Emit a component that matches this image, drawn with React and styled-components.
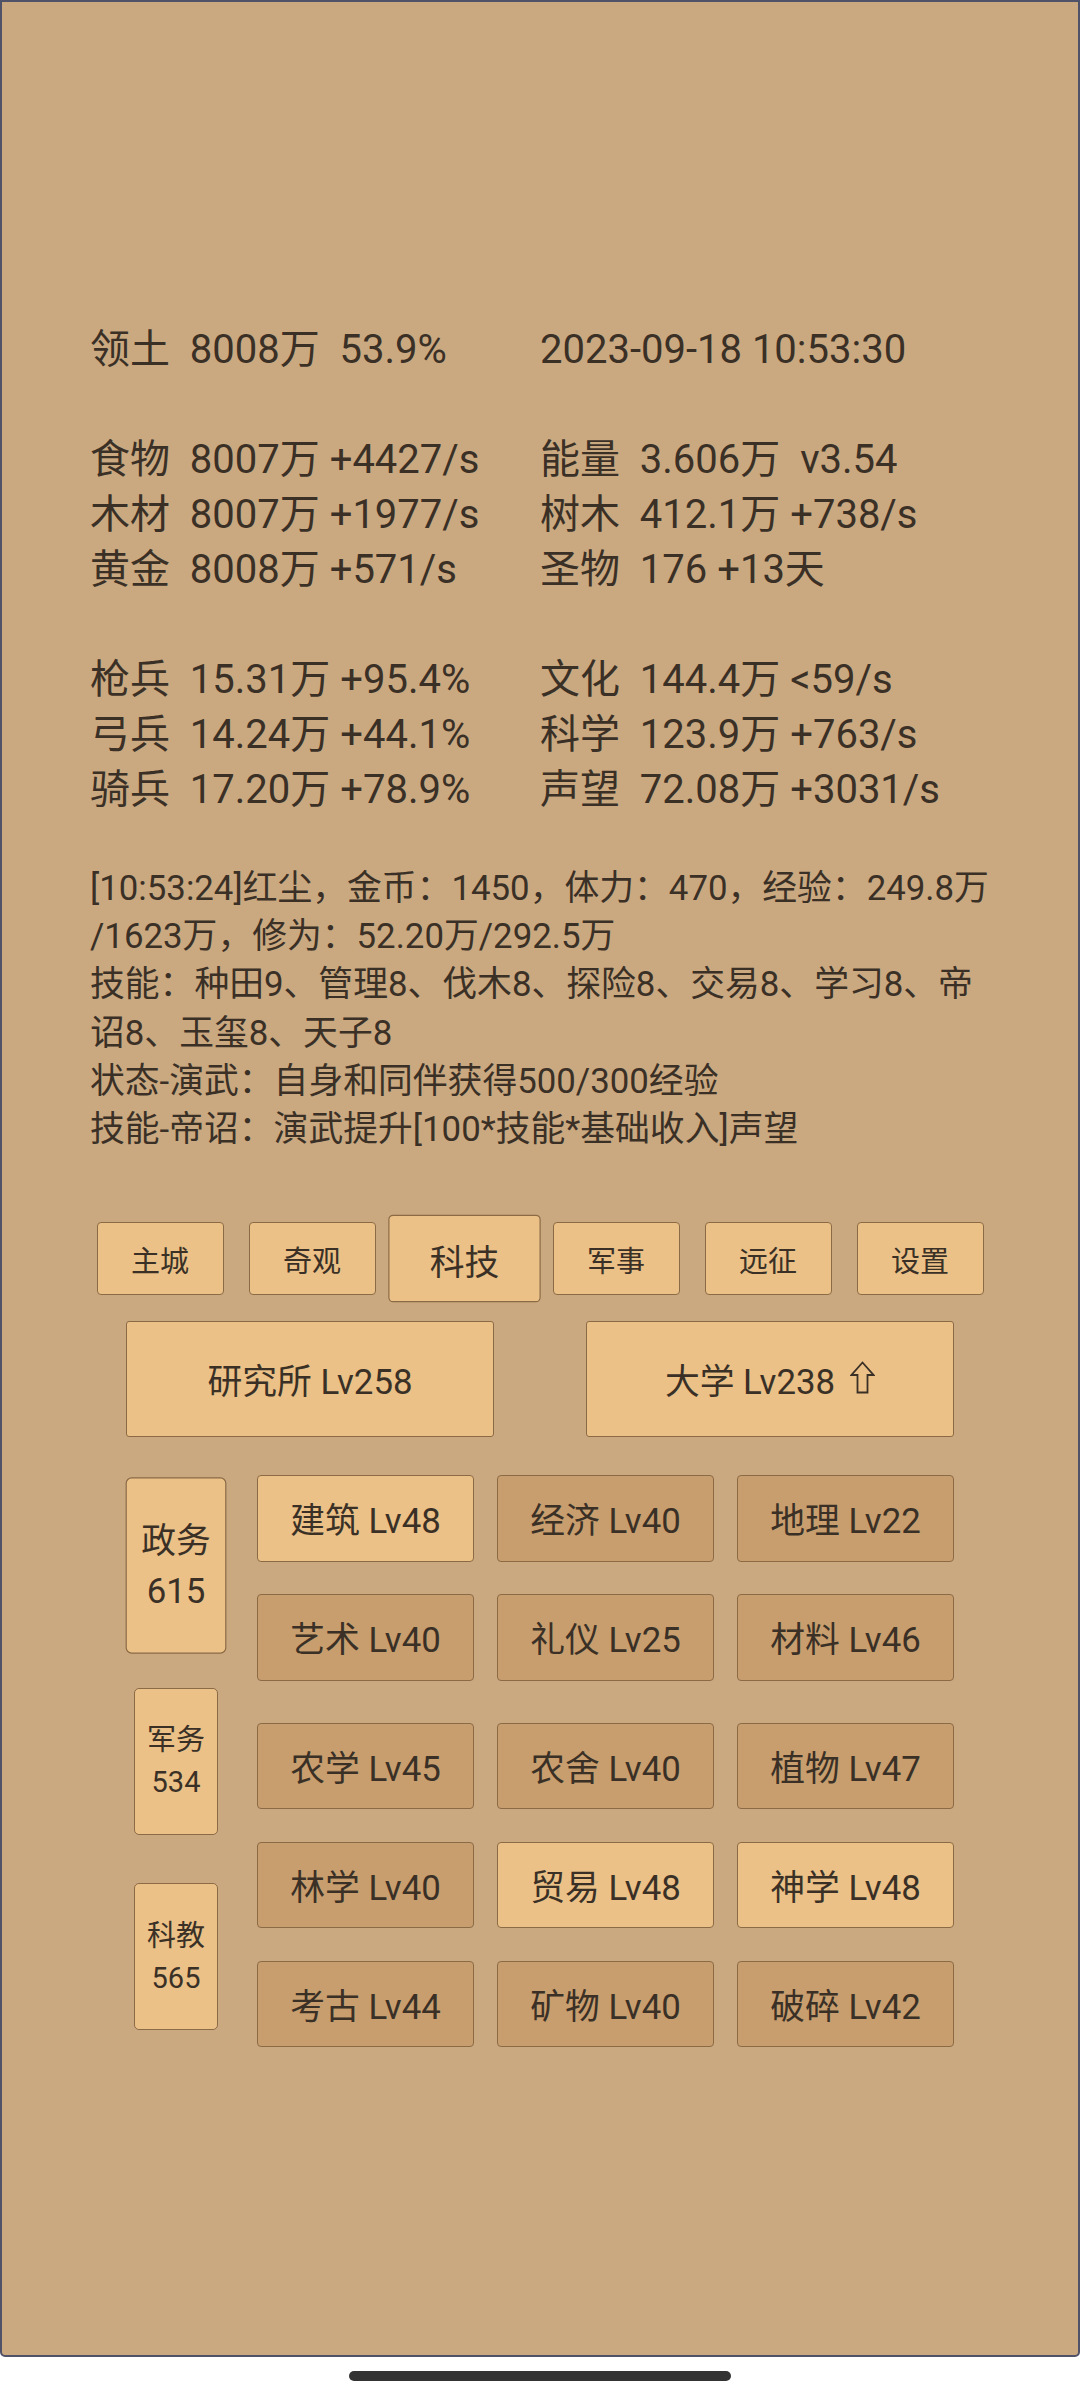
import React from "react";
import styled, { createGlobalStyle, css } from "styled-components";

const GlobalStyle = createGlobalStyle`
  html, body {
    margin: 0;
    padding: 0;
    background: #ffffff;
  }
  body {
    font-family: Roboto, "Noto Sans CJK SC", sans-serif;
    color: #3a3026;
  }
  * { box-sizing: border-box; }
`;

const Screen = styled.div`
  height: 2357px;
  border: 2px solid #505268;
  border-radius: 0 0 5px 5px;
  background: #caa981;
  padding-top: 320px;
  display: flex;
  flex-direction: column;
  align-items: center;
`;

const StatsGrid = styled.div`
  width: 900px;
  display: grid;
  grid-template-columns: 450px 450px;
  grid-auto-rows: 55px;
  font-size: 40px;
  line-height: 55px;
  white-space: pre;
`;

const StatCell = styled.div`
  align-self: center;
`;

const BlankRow = styled.div`
  grid-column: 1 / span 2;
`;

const Log = styled.div`
  width: 906px;
  padding-right: 6px;
  margin-top: 47px;
  margin-left: 6px;
  font-size: 34.8px;
  line-height: 48.2px;
  line-break: anywhere;
`;

const LogLine = styled.p`
  margin: 0;
`;

const baseButton = css`
  border: 1px solid #8b6b46;
  color: #3a3026;
  font-family: Roboto, "Noto Sans CJK SC", sans-serif;
  display: flex;
  align-items: center;
  justify-content: center;
  text-align: center;
  padding: 0;
`;

const NavRow = styled.div`
  margin-top: 69px;
  display: flex;
  gap: 25px;
  justify-content: center;
`;

const NavButton = styled.div`
  ${baseButton};
  width: 127px;
  height: 73px;
  border-radius: 4px;
  background: #ebc187;
  font-size: 29px;
  transform: ${(p) => (p.$active ? "scale(1.2)" : "none")};
`;

const BuildingRow = styled.div`
  margin-top: 26px;
  display: flex;
  gap: 92px;
  justify-content: center;
`;

const BuildingButton = styled.div`
  ${baseButton};
  width: 368px;
  height: 116px;
  border-radius: 3px;
  background: #ebc187;
  font-size: 34.8px;
  white-space: pre;
`;

const UpArrow = styled.svg`
  width: 25px;
  height: 33px;
  margin-left: 15px;
  margin-top: -3px;
  flex: none;
`;

const TechSection = styled.div`
  margin-top: 38px;
  width: 828px;
  display: flex;
  align-items: center;
  gap: 31px;
`;

const Sidebar = styled.div`
  width: 100px;
  display: flex;
  flex-direction: column;
  align-items: center;
  gap: 48.5px;
`;

const SideButton = styled.div`
  ${baseButton};
  width: 84px;
  height: 147px;
  border-radius: 5px;
  background: #ebc187;
  font-size: 29px;
  line-height: 42px;
  flex-direction: column;
  transform: ${(p) => (p.$active ? "scale(1.2)" : "none")};
`;

const TechGroups = styled.div`
  display: flex;
  flex-direction: column;
  gap: 42px;
`;

const TechGrid = styled.div`
  display: grid;
  grid-template-columns: repeat(3, 217px);
  grid-auto-rows: 86.5px;
  column-gap: 23px;
  row-gap: 32.5px;
`;

const TechCell = styled.div`
  ${baseButton};
  border-radius: 4px;
  font-size: 34.8px;
  white-space: pre;
  background: ${(p) => (p.$lit ? "#ebc187" : "#c89e6e")};
`;

const HomeArea = styled.div`
  height: 43px;
  display: flex;
  justify-content: center;
  padding-top: 14px;
`;

const HomeBar = styled.div`
  width: 382px;
  height: 10px;
  border-radius: 5px;
  background: #333333;
`;

const statGroups = [
  [["领土  8008万  53.9%", "2023-09-18 10:53:30"]],
  [
    ["食物  8007万 +4427/s", "能量  3.606万  v3.54"],
    ["木材  8007万 +1977/s", "树木  412.1万 +738/s"],
    ["黄金  8008万 +571/s", "圣物  176 +13天"],
  ],
  [
    ["枪兵  15.31万 +95.4%", "文化  144.4万 <59/s"],
    ["弓兵  14.24万 +44.1%", "科学  123.9万 +763/s"],
    ["骑兵  17.20万 +78.9%", "声望  72.08万 +3031/s"],
  ],
];

const logLines = [
  "[10:53:24]红尘，金币：1450，体力：470，经验：249.8万/1623万，修为：52.20万/292.5万",
  "技能：种田9、管理8、伐木8、探险8、交易8、学习8、帝诏8、玉玺8、天子8",
  "状态-演武：自身和同伴获得500/300经验",
  "技能-帝诏：演武提升[100*技能*基础收入]声望",
];

const tabs = [
  { name: "主城" },
  { name: "奇观" },
  { name: "科技", active: true },
  { name: "军事" },
  { name: "远征" },
  { name: "设置" },
];

const sides = [
  { name: "政务", count: 615, active: true },
  { name: "军务", count: 534 },
  { name: "科教", count: 565 },
];

const techA = [
  { name: "建筑", lv: 48, lit: true },
  { name: "经济", lv: 40 },
  { name: "地理", lv: 22 },
  { name: "艺术", lv: 40 },
  { name: "礼仪", lv: 25 },
  { name: "材料", lv: 46 },
];

const techB = [
  { name: "农学", lv: 45 },
  { name: "农舍", lv: 40 },
  { name: "植物", lv: 47 },
  { name: "林学", lv: 40 },
  { name: "贸易", lv: 48, lit: true },
  { name: "神学", lv: 48, lit: true },
  { name: "考古", lv: 44 },
  { name: "矿物", lv: 40 },
  { name: "破碎", lv: 42 },
];

export default function App() {
  return (
    <>
      <GlobalStyle />
      <Screen>
        <StatsGrid>
          {statGroups.map((group, gi) => (
            <React.Fragment key={gi}>
              {gi > 0 && <BlankRow />}
              {group.map(([l, r], ri) => (
                <React.Fragment key={ri}>
                  <StatCell>{l}</StatCell>
                  <StatCell>{r}</StatCell>
                </React.Fragment>
              ))}
            </React.Fragment>
          ))}
        </StatsGrid>

        <Log>
          {logLines.map((t, i) => (
            <LogLine key={i}>{t}</LogLine>
          ))}
        </Log>

        <NavRow>
          {tabs.map((t) => (
            <NavButton key={t.name} $active={t.active}>
              {t.name}
            </NavButton>
          ))}
        </NavRow>

        <BuildingRow>
          <BuildingButton>研究所 Lv258</BuildingButton>
          <BuildingButton>
            {"大学 Lv238"}
            <UpArrow viewBox="0 0 25 33" aria-label="升级">
              <polygon
                points="12.5,1.5 23.5,14 17.5,14 17.5,31.5 7.5,31.5 7.5,14 1.5,14"
                fill="none"
                stroke="#3a3026"
                strokeWidth="1.8"
                strokeLinejoin="miter"
              />
            </UpArrow>
          </BuildingButton>
        </BuildingRow>

        <TechSection>
          <Sidebar>
            {sides.map((s) => (
              <SideButton key={s.name} $active={s.active}>
                <span>{s.name}</span>
                <span>{s.count}</span>
              </SideButton>
            ))}
          </Sidebar>
          <TechGroups>
            <TechGrid>
              {techA.map((t) => (
                <TechCell key={t.name} $lit={t.lit}>
                  {`${t.name} Lv${t.lv}`}
                </TechCell>
              ))}
            </TechGrid>
            <TechGrid>
              {techB.map((t) => (
                <TechCell key={t.name} $lit={t.lit}>
                  {`${t.name} Lv${t.lv}`}
                </TechCell>
              ))}
            </TechGrid>
          </TechGroups>
        </TechSection>
      </Screen>
      <HomeArea>
        <HomeBar />
      </HomeArea>
    </>
  );
}
